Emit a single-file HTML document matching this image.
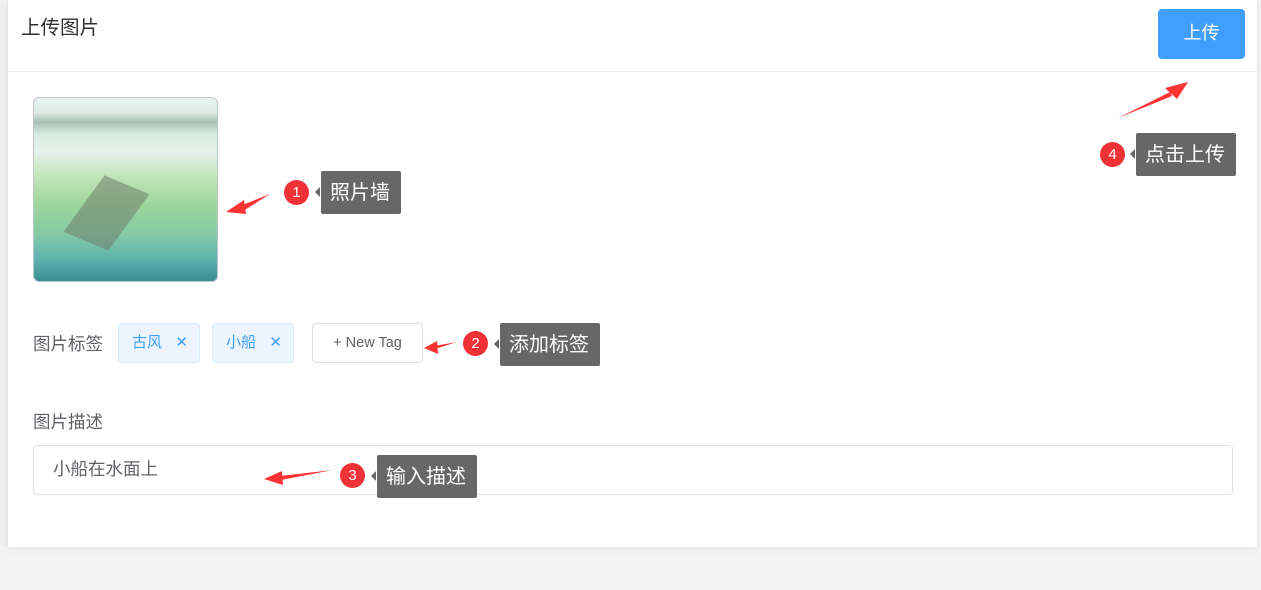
<!DOCTYPE html>
<html><head><meta charset="utf-8"><style>
*{margin:0;padding:0;box-sizing:border-box}
body{width:1261px;height:590px;background:#f4f4f5;position:relative;overflow:hidden;font-family:"Liberation Sans","Noto Sans CJK SC",sans-serif}
.card{position:absolute;left:7px;top:0;width:1251px;height:547px;background:#fff;border-left:1px solid #e6e6e6;border-right:1px solid #e6e6e6;box-shadow:0 2px 8px rgba(0,0,0,.06)}
.strip{position:absolute;left:0;top:0;width:7px;height:547px;background:#f0f0f0}
.abs{position:absolute}
.tip{position:absolute;background:#676767;color:#fff;font-size:20px;border-radius:2px;padding:0 11px 0 9px;line-height:44px;height:43px}
.tip:before{content:"";position:absolute;left:-6px;top:16px;border:5px solid transparent;border-right-color:#676767;border-left:0;width:0;height:0}
.num{position:absolute;width:25px;height:25px;border-radius:50%;background:#f03237;color:#fff;font-size:15px;text-align:center;line-height:25px}
.tag{position:absolute;top:323px;height:40px;border:1px solid #d9ecff;background:#ecf5ff;color:#409eff;border-radius:4px;font-size:15px;line-height:38px;padding-left:13px}
.tag span{position:absolute;right:11px;top:0;font-size:15px}
</style></head><body>
<div class="strip"></div>
<div class="card"></div>
<div class="abs" style="left:21px;top:11px;font-size:19.5px;color:#303133">上传图片</div>
<div class="abs" style="left:1158px;top:9px;width:87px;height:50px;background:#409eff;border-radius:4px;color:#fff;font-size:18px;text-align:center;line-height:48px">上传</div>
<div class="abs" style="left:8px;top:71px;width:1249px;height:1px;background:#ebeef5"></div>
<div class="abs" style="left:33px;top:97px;width:185px;height:185px;border:1px solid #c0c4cc;border-radius:6px;overflow:hidden;background:linear-gradient(180deg,#e8f3ef 0%,#dfece6 8%,#a8c2b6 13%,#d8ebe2 20%,#e5f2ea 30%,#c4e6bc 42%,#9ed69a 58%,#86cba6 74%,#5fb2ae 88%,#3a8f95 100%)">
<div class="abs" style="left:45px;top:85px;width:55px;height:60px;background:#6d7d6a;transform:skew(-20deg) rotate(20deg);opacity:.55"></div>
</div>
<div class="abs" style="left:33px;top:331px;font-size:17.5px;color:#606266">图片标签</div>
<div class="tag" style="left:118px;width:82px">古风<span>✕</span></div>
<div class="tag" style="left:212px;width:82px">小船<span>✕</span></div>
<div class="abs" style="left:312px;top:323px;width:111px;height:40px;border:1px solid #dcdfe6;border-radius:4px;font-size:14.5px;color:#606266;text-align:center;line-height:38px">+ New Tag</div>
<div class="abs" style="left:33px;top:409px;font-size:17.5px;color:#606266">图片描述</div>
<div class="abs" style="left:33px;top:445px;width:1200px;height:50px;border:1px solid #dcdfe6;border-radius:4px;font-size:17.5px;color:#606266;padding-left:19px;line-height:47px">小船在水面上</div>
<svg class="abs" style="left:0;top:0" width="1261" height="590">
<g fill="#f33">
<polygon points="270,194 240,206 243,211"/><polygon points="226,212 244,200 246,214"/>
<polygon points="457,342 434,346 435,349"/><polygon points="424,348 437,341 438,354"/>
<polygon points="333,470 280,476 281,480"/><polygon points="264,479 282,471 283,485"/>
<polygon points="1118,118 1170,92 1172,96"/><polygon points="1188,82 1165,88 1177,99"/>
</g></svg>
<div class="num" style="left:284px;top:180px">1</div>
<div class="tip" style="left:321px;top:171px">照片墙</div>
<div class="num" style="left:463px;top:331px">2</div>
<div class="tip" style="left:500px;top:323px">添加标签</div>
<div class="num" style="left:340px;top:463px">3</div>
<div class="tip" style="left:377px;top:455px">输入描述</div>
<div class="num" style="left:1100px;top:142px">4</div>
<div class="tip" style="left:1136px;top:133px">点击上传</div>
</body></html>
